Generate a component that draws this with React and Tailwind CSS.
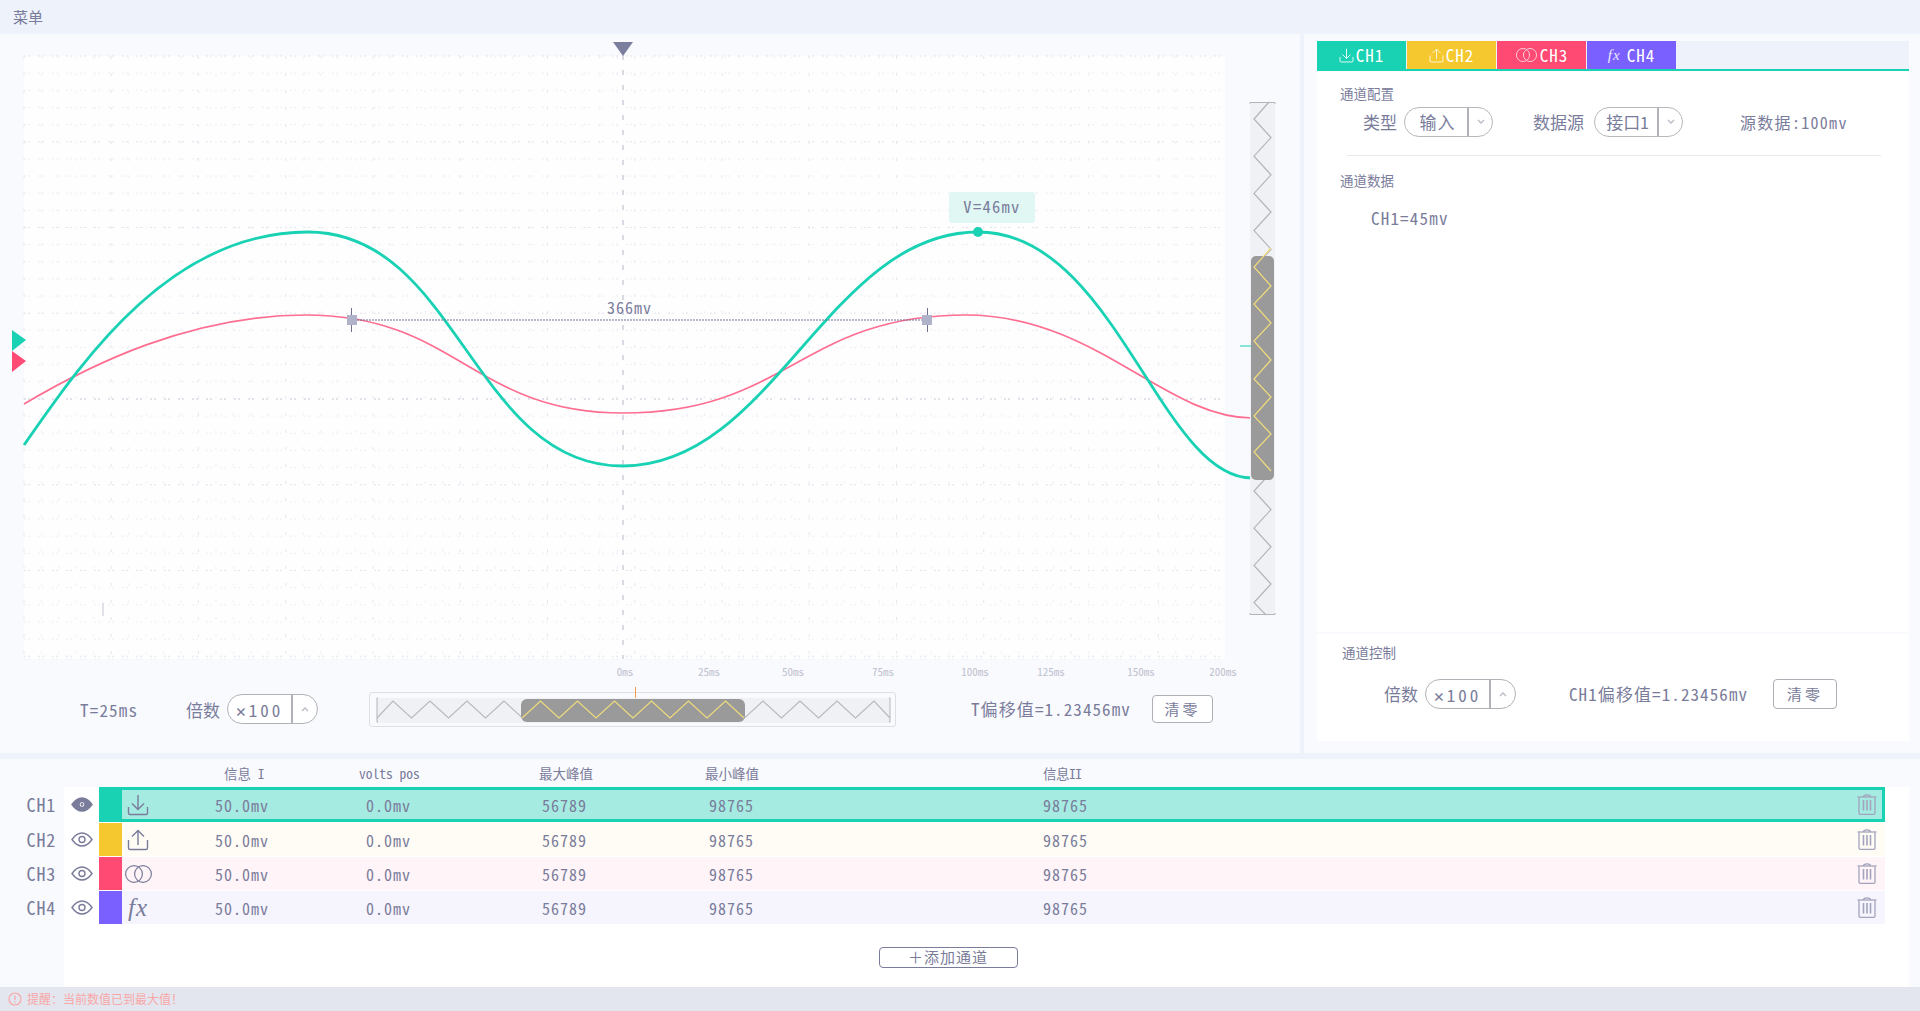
import React from "react";

const TEAL = "#19d1b3";
const INK = "#7a7c9b";

const range = (n) => Array.from({ length: n }, (_, i) => i);

function zig(x1, x2, startY, period, count, startRight) {
  const pts = [];
  for (let i = 0; i < count; i++) {
    const right = startRight ? i % 2 === 0 : i % 2 === 1;
    pts.push(`${right ? x2 : x1},${startY + (i * period) / 2}`);
  }
  return pts.join(" ");
}

function hzig(startX, y1, y2, period, count, startHigh) {
  const pts = [];
  for (let i = 0; i < count; i++) {
    const high = startHigh ? i % 2 === 0 : i % 2 === 1;
    pts.push(`${startX + (i * period) / 2},${high ? y1 : y2}`);
  }
  return pts.join(" ");
}

function Chevron({ up }) {
  return (
    <svg width="10" height="8" viewBox="0 0 10 8" fill="none" stroke="#b9bac6" strokeWidth="1.3">
      <path d={up ? "M2 6 L5 3 L8 6" : "M2 2 L5 5 L8 2"} />
    </svg>
  );
}

function Stepper({ value }) {
  return (
    <div className="flex h-[30px] w-[91px] items-center rounded-full border border-[#b2b2b8] bg-white">
      <div className="flex h-full w-[65px] items-center justify-center border-r-2 border-[#b2b2b8] text-[17px] leading-none tracking-[3px]">
        {value}
      </div>
      <div className="flex flex-1 items-center justify-center">
        <Chevron up />
      </div>
    </div>
  );
}

function ClearBtn({ w = "w-[61px]", h = "h-[28px]" }) {
  return (
    <button className={`flex ${h} ${w} items-center justify-center rounded-[4px] border border-[#aeaeb6] bg-white text-[15px] tracking-[3px] text-[#7a7c9b]`}>
      清零
    </button>
  );
}

function DownloadIcon({ size = 22, color = INK }) {
  return (
    <svg width={size} height={size} viewBox="0 0 22 22" fill="none" stroke={color} strokeWidth="1.4">
      <path d="M11 1 V15 M5 9.5 L11 15.5 L17 9.5" />
      <path d="M1.5 13 V19 Q1.5 20.5 3 20.5 H19 Q20.5 20.5 20.5 19 V13" />
    </svg>
  );
}

function UploadIcon({ size = 22, color = INK }) {
  return (
    <svg width={size} height={size} viewBox="0 0 22 22" fill="none" stroke={color} strokeWidth="1.4">
      <path d="M11 16 V1.5 M5 7.5 L11 1.5 L17 7.5" />
      <path d="M1.5 11 V19 Q1.5 20.5 3 20.5 H19 Q20.5 20.5 20.5 19 V11" />
    </svg>
  );
}

function CirclesIcon({ w = 29, h = 18, color = INK }) {
  return (
    <svg width={w} height={h} viewBox="0 0 29 18" fill="none" stroke={color} strokeWidth="1.2">
      <circle cx="10" cy="9" r="8.4" />
      <circle cx="19" cy="9" r="8.4" />
    </svg>
  );
}

function Eye({ filled }) {
  return (
    <svg width="22" height="15" viewBox="0 0 22 15" fill={filled ? INK : "none"} stroke={INK} strokeWidth="1.4">
      <path d="M1 7.5 C4.5 2.5 8 1 11 1 C14 1 17.5 2.5 21 7.5 C17.5 12.5 14 14 11 14 C8 14 4.5 12.5 1 7.5 Z" />
      <circle cx="11" cy="7.5" r="3" fill={filled ? "white" : "none"} />
      {filled && <circle cx="11" cy="7.5" r="1.4" fill={INK} stroke="none" />}
    </svg>
  );
}

function Trash() {
  return (
    <svg width="20" height="21" viewBox="0 0 20 21" fill="none" stroke="#a2a3bc" strokeWidth="1.3">
      <path d="M0.5 3 H19.5" />
      <path d="M6.5 3 C6.5 1 8 0.8 10 0.8 C12 0.8 13.5 1 13.5 3" />
      <path d="M2 3.5 V19 Q2 20.3 3.3 20.3 H16.7 Q18 20.3 18 19 V3.5" />
      <path d="M6.5 6 V16.5 M10 6 V16.5 M13.5 6 V16.5" strokeWidth="1.6" />
    </svg>
  );
}

function Chart() {
  const hRows = [...range(36).map((i) => 56 + i * 17.15), 659];
  const vCols = range(69).map((i) => 24 + i * 17.45);
  return (
    <div className="relative h-[646px]">
      <svg className="absolute inset-0" width="1300" height="646" viewBox="0 34 1300 646" fill="none">
        <rect x="24" y="56" width="1201" height="603" fill="#fefeff" />
        {vCols.map((x, i) => (
          <line key={i} x1={x} x2={x} y1="56" y2="659" stroke={i % 5 === 0 ? "#e6e7ef" : "#f0f1f6"} strokeWidth="1" strokeDasharray="3 14" />
        ))}
        {hRows.map((y, i) => (
          <line key={i} x1="24" x2="1225" y1={y} y2={y} stroke={i === 20 ? "#c6c7d8" : i % 5 === 0 ? "#e2e3ec" : "#eeeff5"} strokeWidth="1" strokeDasharray="2 2 2 8" />
        ))}
        <line x1="623" x2="623" y1="55" y2="659" stroke="#b4b5c6" strokeWidth="1" strokeDasharray="5 10" />
        <polygon points="613,42 633,42 623,56" fill="#7c7e9d" />
        <polygon points="12,330 26,340 12,351" fill={TEAL} />
        <polygon points="12,351 26,361 12,372" fill="#ff4a74" />
        <line x1="103" x2="103" y1="603" y2="616" stroke="#c4c5cf" strokeWidth="1" />

        <path d="M24 404 C90 365 190 315 306 315 C456 315 473 413 623 413 C788 413 801 315 966 315 C1095 315 1165 418 1252 418" stroke="#ff6d90" strokeWidth="1.7" />
        <path d="M24 445 C80 365 168 232 308 232 C458 232 473 466 623 466 C773 466 828 232 978 232 C1115 232 1160 478 1252 478" stroke={TEAL} strokeWidth="2.8" />

        <line x1="357" x2="922" y1="320" y2="320" stroke="#6f7192" strokeWidth="1" strokeDasharray="2 1" />
        <line x1="351.5" x2="351.5" y1="308" y2="332" stroke="#6f7192" strokeWidth="1" />
        <rect x="347" y="315" width="10" height="10" fill="#b0b2c9" />
        <line x1="927.5" x2="927.5" y1="308" y2="332" stroke="#6f7192" strokeWidth="1" />
        <rect x="922" y="315" width="10" height="10" fill="#b0b2c9" />
        <circle cx="978" cy="232" r="5" fill={TEAL} />

        <rect x="1250" y="102" width="25" height="513" fill="#f0f1f4" />
        <path d="M1250 104 V102.5 H1275 V104 M1250 613 V614.5 H1275 V613" stroke="#b5b5b8" />
        <polyline points={"1269,102 " + zig(1254, 1271, 119, 37.2, 27, false) + " 1266,615"} stroke="#b4b4b8" strokeWidth="1.2" />
        <rect x="1251" y="256" width="23" height="224" rx="5" fill="#9a9a9a" />
        <polyline points="1271,248 1254,267 1271,286 1254,304 1271,323 1254,341 1271,360 1254,379 1271,397 1254,416 1271,434 1254,452 1271,471" stroke="#f0dc7c" strokeWidth="1.2" />
        <line x1="1240" x2="1251" y1="346" y2="346" stroke={TEAL} strokeWidth="1" />
      </svg>

      <div className="absolute left-[949px] top-[158px] flex h-[31px] w-[86px] items-center justify-center rounded-[3px] bg-[#e0f7f4] pb-[3px] text-[16.5px] tracking-[1.3px]">
        V=46mv
      </div>
      <div className="absolute left-[607px] top-[263px] text-[16px] leading-5 tracking-[1px]">366mv</div>
      {[
        ["0ms", 625],
        ["25ms", 709],
        ["50ms", 793],
        ["75ms", 883],
        ["100ms", 975],
        ["125ms", 1051],
        ["150ms", 1141],
        ["200ms", 1223],
      ].map(([t, x]) => (
        <div key={t} className="absolute top-[630px] w-[50px] -translate-x-1/2 text-center text-[11px] leading-[14px] text-[#c0c1cf]" style={{ left: x }}>
          {t}
        </div>
      ))}
    </div>
  );
}

function ChartControls() {
  return (
    <div className="flex h-[58px] items-center">
      <div className="ml-[80px] mt-[2px] w-[58px] whitespace-nowrap text-[17px] tracking-[1.2px]">T=25ms</div>
      <div className="ml-[48px] mt-[1px] w-[34px] text-[17px]">倍数</div>
      <div className="ml-[7px]">
        <Stepper value="✕100" />
      </div>
      <div className="relative ml-[51px] h-[35px] w-[527px] rounded-[3px] border border-[#dedfe3]">
        <svg className="absolute left-0 top-0" width="525" height="33" viewBox="369 692 525 33" fill="none">
          <rect x="376" y="697" width="513" height="25" fill="#f0f1f4" />
          <path d="M377 697 H376 V721 H377 M888 697 H889 V721 H888" stroke="#b5b5b8" />
          <polyline points={"376,717 " + hzig(392, 700, 717, 37, 27, true) + " 889,717"} stroke="#b8b8bc" strokeWidth="1.1" />
          <rect x="520" y="698" width="224" height="23" rx="6" fill="#9a9a9a" />
          <polyline points={hzig(521, 717, 700, 37, 13, true)} stroke="#f0dc7c" strokeWidth="1.1" />
        </svg>
        <div className="absolute left-[265px] top-[-6px] h-[11px] w-px bg-[#f59a4a]" />
      </div>
      <div className="ml-[75px] w-[163px] whitespace-nowrap text-[17px] tracking-[1.1px]">T偏移值=1.23456mv</div>
      <div className="ml-[18px]">
        <ClearBtn />
      </div>
    </div>
  );
}

function Select({ value, labelClass = "" }) {
  return (
    <div className="flex h-[30px] w-[89px] items-center rounded-full border border-[#b8b8bc] bg-white">
      <div className={`flex h-full w-[64px] items-center justify-center border-r-2 border-[#b2b2b8] text-[17px] ${labelClass}`}>{value}</div>
      <div className="flex flex-1 items-center justify-center">
        <Chevron />
      </div>
    </div>
  );
}

function Tab({ color, children, label }) {
  return (
    <div className={`flex h-[28px] w-[89px] items-center justify-center gap-[2px] text-[17px] tracking-[1px] text-white ${color}`}>
      {children}
      <span>{label}</span>
    </div>
  );
}

function RightPanel() {
  return (
    <div className="flex h-[719px] flex-1 flex-col bg-[#f9fafe] pl-[13px] pr-[11px] pt-[7px]">
      <div className="flex h-[30px] gap-px border-b-2 border-[#19d1b3] bg-[#eef2fb]">
        <Tab color="bg-[#19d1b3]" label="CH1">
          <DownloadIcon size={15} color="#e8fbf7" />
        </Tab>
        <Tab color="bg-[#f4c82e]" label="CH2">
          <UploadIcon size={15} color="#fff6d8" />
        </Tab>
        <Tab color="bg-[#ff4a74]" label="CH3">
          <CirclesIcon w={23} h={14} color="#ffd5df" />
        </Tab>
        <Tab color="bg-[#7a60ff]" label="CH4">
          <span className="mr-1 font-['Liberation_Serif',serif] text-[15px] italic text-[#ece8ff]">fx</span>
        </Tab>
      </div>
      <div className="h-[561px] bg-white pl-[23px]">
        <div className="pt-[13px] text-[13.5px] leading-[18px]">通道配置</div>
        <div className="mt-[5px] flex h-[30px] items-center">
          <div className="ml-[23px] w-[34px] text-[17px]">类型</div>
          <div className="ml-[7px]">
            <Select value="输入" labelClass="pl-[3px] tracking-[1px]" />
          </div>
          <div className="ml-[40px] w-[53px] whitespace-nowrap text-[17px]">数据源</div>
          <div className="ml-[8px]">
            <Select value="接口1" labelClass="pl-[3px]" />
          </div>
          <div className="ml-[57px] whitespace-nowrap text-[16px] tracking-[1.3px]">源数据:100mv</div>
        </div>
        <div className="ml-[7px] mt-[18px] h-px w-[534px] bg-[#e9eaee]" />
        <div className="mt-[15px] text-[13.5px] leading-[18px]">通道数据</div>
        <div className="ml-[31px] mt-[18px] text-[17px] leading-[22px] tracking-[1.2px]">CH1=45mv</div>
      </div>
      <div className="mt-[2px] h-[107px] bg-white pl-[25px]">
        <div className="pt-[9px] text-[13.5px] leading-[18px]">通道控制</div>
        <div className="mt-[18px] flex h-[30px] items-center">
          <div className="ml-[42px] w-[34px] text-[17px]">倍数</div>
          <div className="ml-[7px]">
            <Stepper value="✕100" />
          </div>
          <div className="ml-[53px] w-[183px] whitespace-nowrap text-[17px] tracking-[1.1px]">CH1偏移值=1.23456mv</div>
          <div className="ml-[21px]">
            <ClearBtn w="w-[64px]" h="h-[30px]" />
          </div>
        </div>
      </div>
    </div>
  );
}

const ROWS = [
  { name: "CH1", color: "bg-[#19d1b3]", bg: "bg-[#a6ebe1]", h: "h-[35px]", outline: "outline-3 -outline-offset-3 outline-[#19d1b3]", icon: <DownloadIcon />, filled: true },
  { name: "CH2", color: "bg-[#f4c82e]", bg: "bg-[#fffcf5]", h: "h-[33px]", outline: "", icon: <UploadIcon /> },
  { name: "CH3", color: "bg-[#ff4a74]", bg: "bg-[#fff5f8]", h: "h-[33px]", outline: "", icon: <CirclesIcon /> },
  { name: "CH4", color: "bg-[#7a60ff]", bg: "bg-[#f6f5fe]", h: "h-[33px]", outline: "", icon: <span className="font-['Liberation_Serif',serif] text-[25px] italic leading-none">fx</span> },
];

function ChannelTable() {
  return (
    <div className="h-[228px] bg-[#f9fafe]">
      <div className="flex h-[28px] items-center text-[13.5px]">
        <div className="ml-[224px] w-[135px]">信息 I</div>
        <div className="w-[180px]">volts pos</div>
        <div className="w-[166px]">最大峰值</div>
        <div className="w-[338px]">最小峰值</div>
        <div className="tracking-[-0.5px]">信息II</div>
      </div>
      <div className="flex h-[200px]">
        <div className="flex w-[64px] flex-col gap-px">
          {ROWS.map((r) => (
            <div key={r.name} className={`flex ${r.h} items-center justify-end pr-[8px] text-[18px] tracking-[0.8px]`}>
              {r.name}
            </div>
          ))}
        </div>
        <div className="mr-[11px] flex h-full flex-1 flex-col bg-white">
          <div className="flex flex-col gap-px">
            {ROWS.map((r) => (
              <div key={r.name} className={`flex ${r.h} w-[1821px] items-center`}>
                <div className="flex w-[35px] items-center justify-center">
                  <Eye filled={r.filled} />
                </div>
                <div className={`flex h-full flex-1 items-center ${r.bg} ${r.outline} text-[16px] tracking-[1px]`}>
                  <div className={`h-full w-[23px] ${r.color}`} />
                  <div className="flex w-[32px] items-center justify-center">{r.icon}</div>
                  <div className="ml-[61px] w-[151px]">50.0mv</div>
                  <div className="w-[176px]">0.0mv</div>
                  <div className="w-[167px]">56789</div>
                  <div className="w-[334px]">98765</div>
                  <div className="w-[100px]">98765</div>
                  <div className="ml-auto mr-[8px]">
                    <Trash />
                  </div>
                </div>
              </div>
            ))}
          </div>
          <div className="flex flex-1 justify-center pr-[77px] pt-[23px]">
            <button className="flex h-[21px] w-[139px] items-center justify-center rounded-[4px] border border-[#7a7c9b] bg-white text-[15px] tracking-[1px] text-[#7a7c9b]">
              ＋添加通道
            </button>
          </div>
        </div>
      </div>
    </div>
  );
}

export default function App() {
  return (
    <div className="flex h-[1011px] w-[1920px] flex-col overflow-hidden bg-[#eef2fb] font-['Noto_Sans_Mono_CJK_SC','Noto_Sans_CJK_SC',monospace] text-[#7a7c9b]">
      <div className="flex h-[34px] items-center pl-[13px] text-[15px]">菜单</div>
      <div className="flex h-[719px] gap-[4px]">
        <div className="w-[1300px] bg-[#f9fafe]">
          <Chart />
          <ChartControls />
        </div>
        <RightPanel />
      </div>
      <div className="mt-[6px]">
        <ChannelTable />
      </div>
      <div className="flex h-[24px] items-center gap-[5px] bg-[#e3e6ef] pl-[8px] text-[12px] text-[#f9a6a6]">
        <svg width="14" height="14" viewBox="0 0 14 14" fill="none" stroke="#f9a6a6" strokeWidth="1.2">
          <circle cx="7" cy="7" r="6" />
          <path d="M7 3.5 V8 M7 9.5 V10.8" />
        </svg>
        <span>提醒：当前数值已到最大值！</span>
      </div>
    </div>
  );
}
